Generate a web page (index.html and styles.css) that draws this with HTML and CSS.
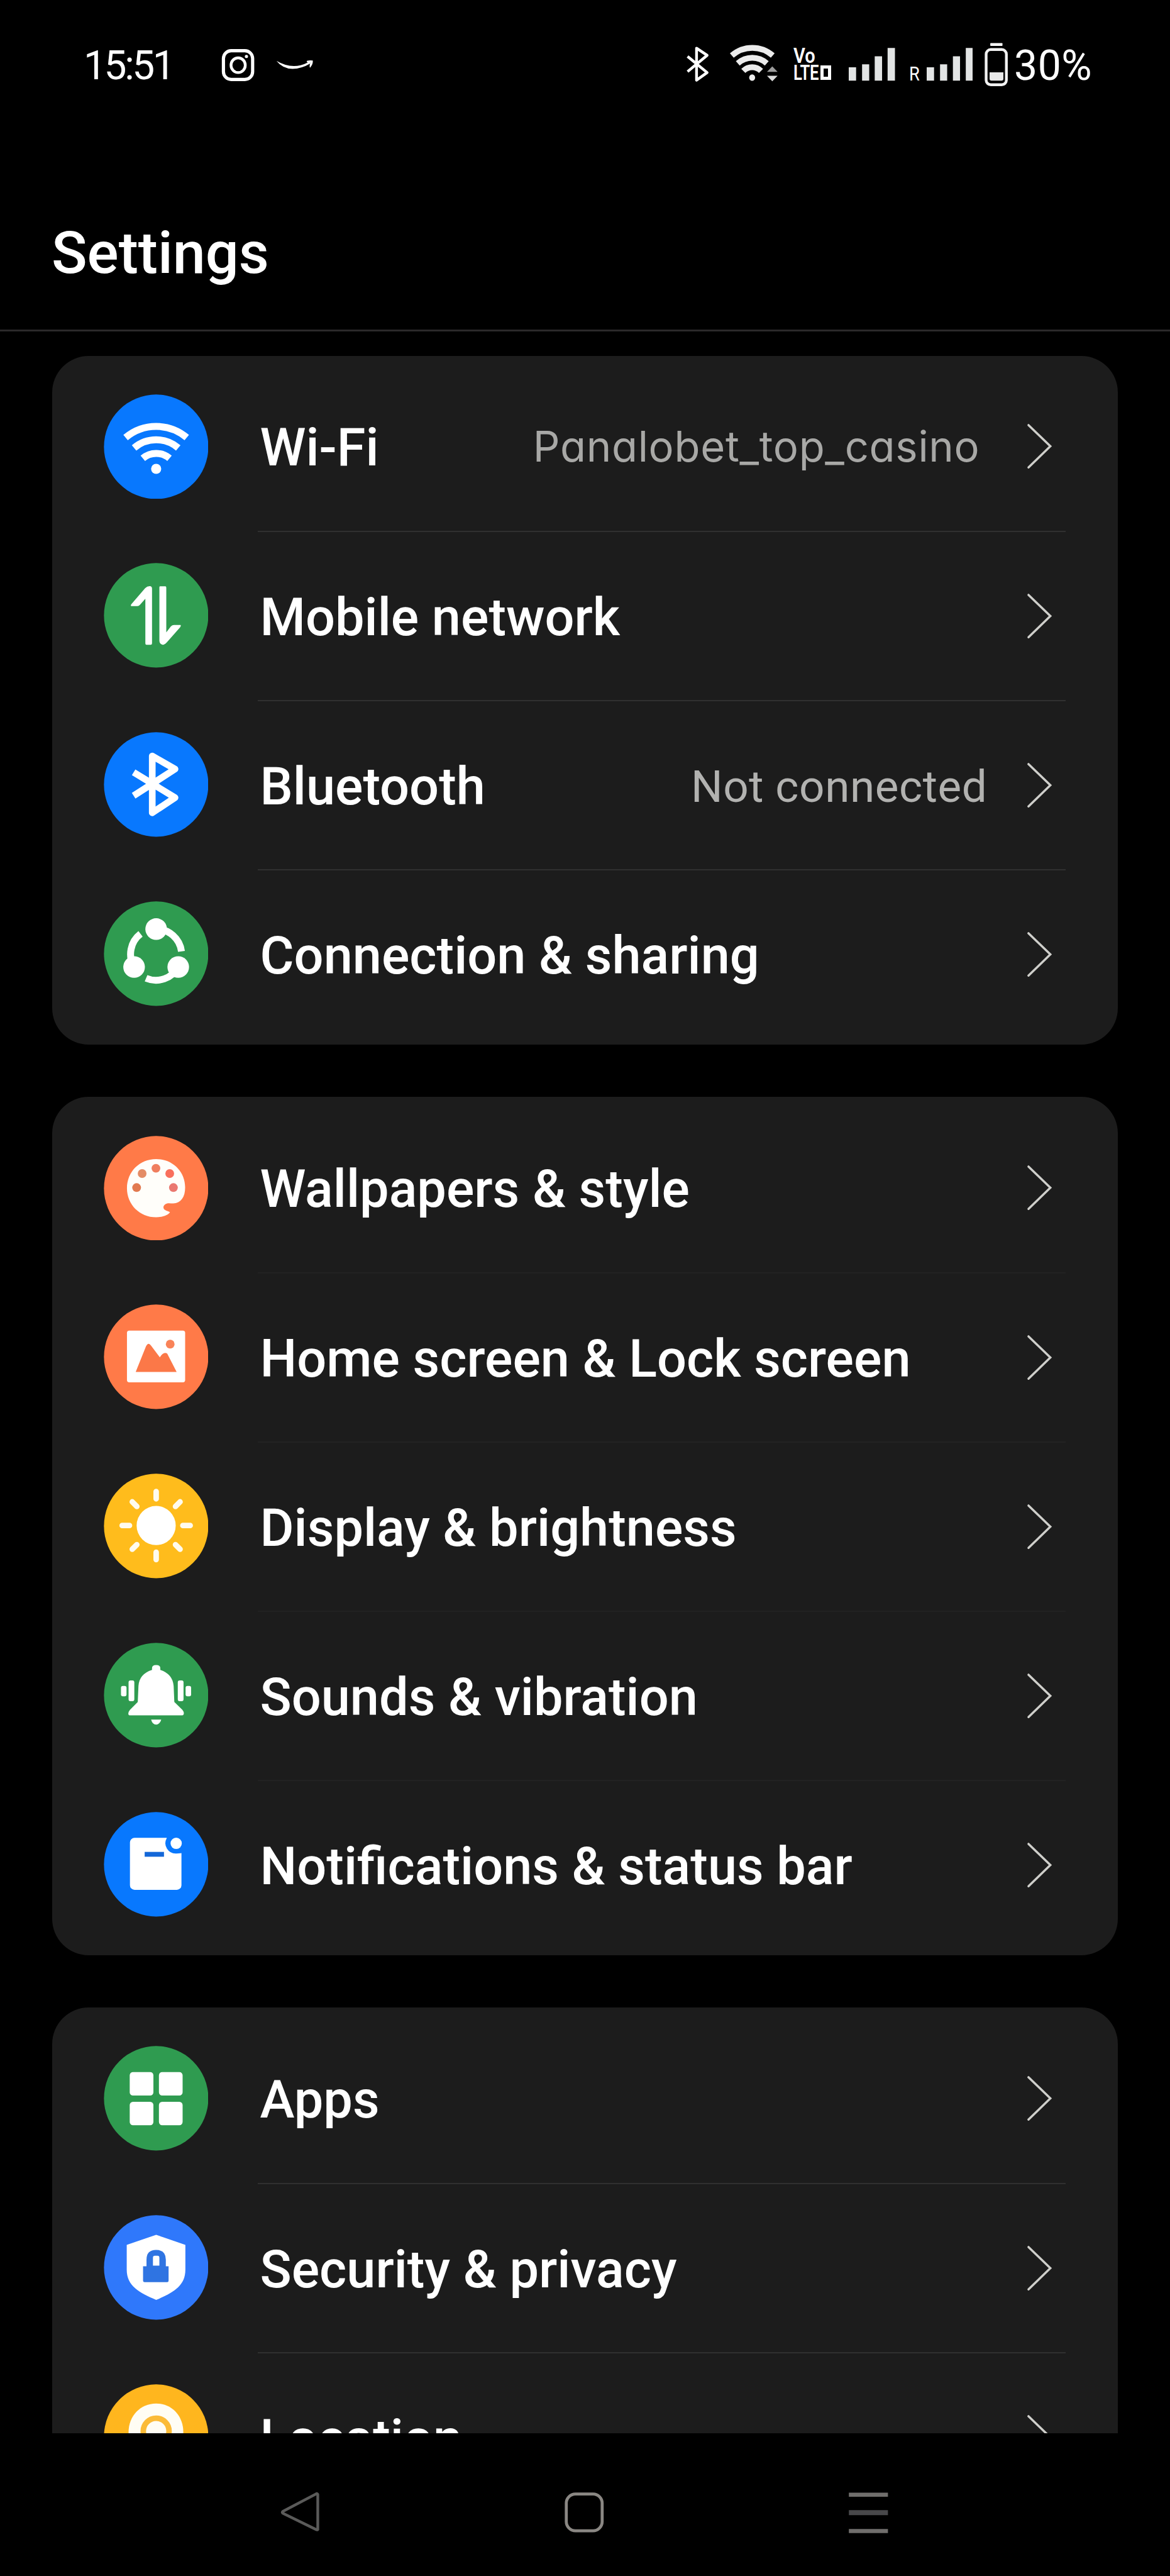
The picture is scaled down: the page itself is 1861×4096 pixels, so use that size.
FILE: index.html
```html
<!DOCTYPE html>
<html lang="en">
<head>
<meta charset="utf-8">
<title>Settings</title>
<link rel="stylesheet" href="styles.css">
</head>
<body>
<div class="screen">
  <div class="status-bar">
    <span class="clock">15:51</span>
    <svg class="s-insta" viewBox="480 90 76 100"><rect x="486" y="110" width="63.5" height="62.5" rx="17" fill="none" stroke="#fff" stroke-width="7"/><ellipse cx="518" cy="141.500" rx="15.500" ry="16" fill="none" stroke="#fff" stroke-width="6"/><circle cx="536" cy="122.500" r="3.500" fill="#fff"/></svg>
    <svg class="s-smile" viewBox="600 90 84 100"><path d="M601 132Q636 152.500 668 136L673 131.500L674.500 138Q655 149.500 636 149.500Q614 149 601 132Z" fill="#fff"/><path d="M667 132Q674 130 680 131.500Q681 139 674 147Q672 145 674.500 136Q671 134 667 135Z" fill="#fff"/></svg>
    <div class="status-right">
      <svg class="s-bt" viewBox="1490 90 54 100"><path d="M1495 122.500L1537.500 157.500L1514.500 174V104.500L1537.500 120L1495 155.500" fill="none" stroke="#fff" stroke-width="6" stroke-linejoin="round"/></svg>
      <svg class="s-wifi" viewBox="1586 90 108 100"><g fill="none" stroke="#ececec" stroke-width="12.500"><path d="M1591.500 120.500A67.500 67.500 0 0 1 1680.500 120.500"/><path d="M1604.500 137.500A47 47 0 0 1 1667.500 137.500"/><path d="M1616.500 154A27 27 0 0 1 1655 154"/></g><ellipse cx="1635.700" cy="168.500" rx="6.500" ry="7" fill="#f0f0f0"/><path d="M1679.500 144L1691 156H1668Z" fill="#9c9c9c"/><path d="M1679.500 176.500L1691 164.500H1668Z" fill="#dcdcdc"/></svg>
      <div class="volte"><span class="vo">Vo</span><div class="lted"><span class="lte">LTE</span><i class="hd"></i></div></div>
      <svg class="s-bars" viewBox="1845 90 101 100"><path d="M1845 146h16v29h-16zM1874 139.500h15.500v35.500h-15.500zM1901.500 122h16v53h-16zM1929.500 104h16v71h-16z" fill="#e2e4e4"/></svg>
      <span class="roam">R</span>
      <svg class="s-bars2" viewBox="2014 90 101 100"><path d="M2014 146h16v29h-16zM2043 139.500h15.500v35.500h-15.500zM2071 122h15.500v53h-15.500zM2099 104h16v71h-16z" fill="#e2e4e4"/></svg>
      <svg class="s-batt" viewBox="2140 90 51 100"><rect x="2152.500" y="93.500" width="26.500" height="6" rx="1" fill="#fff"/><rect x="2143.500" y="107.500" width="44" height="76.500" rx="10" fill="none" stroke="#f2f2f2" stroke-width="6"/><path d="M2151 157h30v14q0 4-4 4h-22q-4 0-4-4z" fill="#e8e8e8"/></svg>
      <span class="pct">30%</span>
    </div>
  </div>
  <header class="header"><h1>Settings</h1></header>
  <main class="list">
    <section class="card">
      <div class="row">
        <svg class="icon" viewBox="0 0 228 228"><circle cx="114" cy="114" r="113.500" fill="#0878fe"/><g fill="none" stroke="#fff" stroke-width="15"><path d="M47.500 94A103 103 0 0 1 180.500 94"/><path d="M66 116.500A74 74 0 0 1 162 116.500"/><path d="M85 139A45 45 0 0 1 143 139"/></g><circle cx="114" cy="162" r="11" fill="#fff"/></svg>
        <div class="body"><span class="label">Wi-Fi</span><span class="value ssid">Panalobet_top_casino</span><svg class="chev" viewBox="0 0 56 100"><path d="M4 4L51.500 50L4 96"/></svg></div>
      </div>
      <div class="row">
        <svg class="icon" viewBox="0 0 228 228"><circle cx="114" cy="114" r="113.500" fill="#2f9b50"/><path d="M105 175Q105 178 102 178H93Q90.500 178 90.500 175V78L79 91Q76.500 94 73 94H60Q58 93 60 90L90 55Q95 50 101 50.500Q105 51 105 56ZM121 53Q121 51 123 51H134Q136 51 136 54V151L146 138Q149 135 153 135H167Q168.500 136.500 166 140L137 173Q131 179 128 178Q121 176 121 170Z" fill="#fff"/></svg>
        <div class="body"><span class="label">Mobile network</span><svg class="chev" viewBox="0 0 56 100"><path d="M4 4L51.500 50L4 96"/></svg></div>
      </div>
      <div class="row">
        <svg class="icon" viewBox="0 0 228 228"><circle cx="114" cy="114" r="113.500" fill="#0878fe"/><path d="M65 87.500L155 142.500L105.500 175.500V52L155 80.500L65 138.500" fill="none" stroke="#fff" stroke-width="14.500" stroke-linejoin="round"/></svg>
        <div class="body"><span class="label">Bluetooth</span><span class="value">Not connected</span><svg class="chev" viewBox="0 0 56 100"><path d="M4 4L51.500 50L4 96"/></svg></div>
      </div>
      <div class="row">
        <svg class="icon" viewBox="0 0 228 228"><circle cx="114" cy="114" r="113.500" fill="#2f9b50"/><g fill="#fff"><circle cx="114" cy="60.500" r="23.500"/><circle cx="66" cy="143" r="23.500"/><circle cx="162" cy="143" r="23.500"/></g><g fill="none" stroke="#fff" stroke-width="15"><path d="M114 60.500A55.500 55.500 0 0 1 169 109"/><path d="M66 143A55.500 55.500 0 0 1 80 71"/><path d="M162 143A55.500 55.500 0 0 1 92 167.500"/></g></svg>
        <div class="body"><span class="label">Connection &amp; sharing</span><svg class="chev" viewBox="0 0 56 100"><path d="M4 4L51.500 50L4 96"/></svg></div>
      </div>
    </section>

    <section class="card faint">
      <div class="row">
        <svg class="icon" viewBox="0 0 228 228"><circle cx="114" cy="114" r="113.500" fill="#ff7a48"/><path d="M114 50.500C150 50.500 177 78 177 112C177 133 168 146 151 147C146 147 142 146 138 147C130 149 127 157 133 161C137 164 141 164 144 166C141 172 127 177 114 177C78 177 50.500 149 50.500 114C50.500 78 78 50.500 114 50.500Z" fill="#fffefa"/><circle cx="71.500" cy="112.500" r="9.500" fill="#e27a50"/><circle cx="83.500" cy="82" r="9.500" fill="#e48c66"/><circle cx="113.500" cy="70.500" r="9.500" fill="#f07e5e"/><circle cx="143.500" cy="82" r="9.500" fill="#f96f5c"/><circle cx="151.500" cy="112.500" r="9.500" fill="#ea7870"/></svg>
        <div class="body"><span class="label">Wallpapers &amp; style</span><svg class="chev" viewBox="0 0 56 100"><path d="M4 4L51.500 50L4 96"/></svg></div>
      </div>
      <div class="row">
        <svg class="icon" viewBox="0 0 228 228"><circle cx="114" cy="114" r="113.500" fill="#ff7a48"/><rect x="50.500" y="57" width="126.500" height="112.500" rx="5" fill="#fff"/><path d="M69.500 147L92 91Q97 81 103 90L122 115Q130 102 138 107L158.500 147Z" fill="#fb7848"/><circle cx="144.500" cy="86.500" r="9.500" fill="#f98358"/></svg>
        <div class="body"><span class="label">Home screen &amp; Lock screen</span><svg class="chev" viewBox="0 0 56 100"><path d="M4 4L51.500 50L4 96"/></svg></div>
      </div>
      <div class="row">
        <svg class="icon" viewBox="0 0 228 228"><circle cx="114" cy="114" r="113.500" fill="#ffbc1c"/><circle cx="114" cy="113" r="42.500" fill="#fff"/><g fill="none" stroke="#fffbee" stroke-width="12" stroke-linecap="round"><path d="M114 39v16M114 171v16M40 113h16M172 113h16M62 61.500l10 10M166 61.500l-10 10M62 164.500l10-10M166 164.500l-10-10"/></g></svg>
        <div class="body"><span class="label">Display &amp; brightness</span><svg class="chev" viewBox="0 0 56 100"><path d="M4 4L51.500 50L4 96"/></svg></div>
      </div>
      <div class="row">
        <svg class="icon" viewBox="0 0 228 228"><circle cx="114" cy="114" r="113.500" fill="#2f9b50"/><path d="M105 59V55Q105 48.500 114 48.500Q123 48.500 123 55V59Q150 68 152 94L153.500 129L171 146Q175 151 174 155Q173 158 170 158H57Q54 158 53.500 155Q53 151 57 146L74 129L75.500 94Q77 68 105 59ZM103 167H125Q122 178 114 178Q106 178 103 167Z" fill="#fff"/><g fill="#fff"><rect x="54" y="82" width="12.500" height="45" rx="4"/><rect x="161" y="82" width="12.500" height="45" rx="4"/><rect x="37.500" y="94" width="12" height="22.500" rx="4"/><rect x="178" y="94" width="12" height="22.500" rx="4"/></g></svg>
        <div class="body"><span class="label">Sounds &amp; vibration</span><svg class="chev" viewBox="0 0 56 100"><path d="M4 4L51.500 50L4 96"/></svg></div>
      </div>
      <div class="row">
        <svg class="icon" viewBox="0 0 228 228"><circle cx="114" cy="114" r="113.500" fill="#0878fe"/><rect x="57" y="56.500" width="112" height="113" rx="10" fill="#fff"/><path d="M137 55H171V89Q169 90.500 158 90.500A22.500 22.500 0 0 1 137 57Z" fill="#0878fe"/><circle cx="157.500" cy="68.500" r="12.300" fill="#fff"/><rect x="89" y="87" width="42" height="10.500" fill="#1467d8"/></svg>
        <div class="body"><span class="label">Notifications &amp; status bar</span><svg class="chev" viewBox="0 0 56 100"><path d="M4 4L51.500 50L4 96"/></svg></div>
      </div>
    </section>

    <section class="card">
      <div class="row">
        <svg class="icon" viewBox="0 0 228 228"><circle cx="114" cy="114" r="113.500" fill="#2f9b50"/><g fill="#fff"><rect x="56.500" y="57" width="51.500" height="51" rx="7"/><rect x="120" y="57" width="51.500" height="51" rx="7"/><rect x="56.500" y="121.500" width="51.500" height="51" rx="7"/><rect x="120" y="121.500" width="51.500" height="51" rx="7"/></g></svg>
        <div class="body"><span class="label">Apps</span><svg class="chev" viewBox="0 0 56 100"><path d="M4 4L51.500 50L4 96"/></svg></div>
      </div>
      <div class="row">
        <svg class="icon" viewBox="0 0 228 228"><circle cx="114" cy="114" r="113.500" fill="#2f78fb"/><path d="M114 43L177.500 65V119C177.500 154 151 169 114 184.500C77 169 50 154 50 119V65Z" fill="#fff"/><path d="M85.500 111.500H93V97Q93 76 114 76Q135 76 135 97V111.500H141V143Q141 146 138 146H89Q85.500 146 85.500 143ZM107 93V110H121V93Q121 88.500 117 88.500H111Q107 88.500 107 93Z" fill="#2f74e2" fill-rule="evenodd"/></svg>
        <div class="body"><span class="label">Security &amp; privacy</span><svg class="chev" viewBox="0 0 56 100"><path d="M4 4L51.500 50L4 96"/></svg></div>
      </div>
      <div class="row">
        <svg class="icon" viewBox="0 0 228 228"><circle cx="114" cy="114" r="113.500" fill="#ffb61e"/><path d="M114 42C148 42 173 69 173 104C173 142 140 170 114 188C88 170 54 142 54 104C54 69 80 42 114 42Z" fill="#fffdf4"/><circle cx="114" cy="102" r="28" fill="none" stroke="#fbbb38" stroke-width="12"/></svg>
        <div class="body"><span class="label">Location</span><svg class="chev" viewBox="0 0 56 100"><path d="M4 4L51.500 50L4 96"/></svg></div>
      </div>
    </section>
  </main>
  <nav class="nav">
    <svg class="n-back" viewBox="608 5412 92 98"><path d="M692 5422V5498Q691 5500 688 5498L616 5463Q614 5461 616 5459L688 5421Q691 5419 692 5422Z" fill="none" stroke="#5a5a59" stroke-width="6"/></svg>
    <svg class="n-home" viewBox="1226 5412 92 98"><rect x="1232.500" y="5421" width="78" height="80" rx="20" fill="none" stroke="#8a8783" stroke-width="6.500"/></svg>
    <svg class="n-recent" viewBox="1844 5412 92 98"><path d="M1847 5418h85v9h-85zM1847 5497h85v9h-85z" fill="#706e6c"/><path d="M1847 5456h85v11h-85z" fill="#48484a"/></svg>
  </nav>
</div>
</body>
</html>
```
FILE: styles.css
```css
* { box-sizing: border-box; }
html, body { margin: 0; background: #000; }
body { font-family: Roboto, "Liberation Sans", sans-serif; color: #fff; }
svg { display: block; flex: none; }
span { white-space: nowrap; flex: none; }

.screen {
  width: 1861px;
  height: 4096px;
  display: flex;
  flex-direction: column;
  background: #000;
  overflow: hidden;
}

/* status bar */
.status-bar {
  height: 205px;
  flex: none;
  display: flex;
  align-items: center;
  padding: 0 118px 0 133px;
}
.status-bar svg { height: 73.15px; }
.clock, .pct { font-size: 64px; line-height: 75px; padding-top: 4px; }
.clock { width: 218px; letter-spacing: -3.4px; }
.s-insta { width: 55.6px; }
.s-smile { width: 61.5px; margin-left: 32.2px; }
.status-right { margin-left: auto; display: flex; align-items: center; width: 653px; }
.s-bt { width: 39.5px; }
.s-wifi { width: 79px; margin-left: 30.7px; }
.volte {
  display: flex;
  flex-direction: column;
  width: 60px;
  margin-left: 22.5px;
  font-weight: 600;
  font-size: 33px;
  line-height: 26.5px;
}
.vo, .lte { transform: scaleX(0.78); transform-origin: left center; }
.vo { transform: scaleX(0.88); width: 41px; }
.lted { display: flex; align-items: center; }
.lte { width: 43px; letter-spacing: -0.5px; }
.hd { flex: none; width: 17px; height: 23px; border: 5px solid #fff; }
.s-bars { width: 73.9px; margin-left: 28px; }
.roam { width: 22px; margin-left: 22px; font-size: 31px; line-height: 36px; padding-top: 31px; transform: scaleX(0.88); transform-origin: left center; }
.s-bars2 { width: 73.9px; margin-left: 6px; }
.s-batt { width: 37.3px; margin-left: 18.3px; }
.pct { margin-left: 10px; font-size: 66px; letter-spacing: 0.500px; }

/* title */
.header {
  height: 322px;
  flex: none;
  border-bottom: 3px solid #2b292a;
  padding: 143px 0 0 82px;
}
h1 { margin: 0; font-weight: 500; font-size: 93.500px; line-height: 108px; }

/* cards */
.list { height: 3341.500px; flex: none; overflow: hidden; padding: 38.500px 83px 0 82.500px; }
.card {
  background: #1c1c1c;
  border-radius: 58px;
  padding: 10px 0;
  margin-bottom: 83.400px;
}
.row { height: 268.900px; display: flex; align-items: center; padding-left: 82.200px; }
.icon { width: 166.800px; height: 166.800px; }
.body {
  width: 1285px;
  height: 100%;
  margin-left: 79px;
  padding-right: 21px;
  display: flex;
  align-items: center;
}
.row + .row .body { border-top: 2px solid #303030; }
.faint .row + .row .body { border-top-color: #222222; }
.label { font-size: 82.900px; line-height: 96px; font-weight: 500; padding: 5px 0 0 3px; }
.value { margin-left: auto; font-size: 71px; line-height: 84px; font-weight: 400; color: #b2b2b0; padding-top: 4px; letter-spacing: 0.600px; }
.ssid { font-family: Inter, Roboto, sans-serif; font-size: 67px; font-weight: 400; font-feature-settings: "cv11"; color: #a8a8a6; padding: 1px 12px 0 0; letter-spacing: 0.700px; }
.chev { width: 41px; height: 73.150px; margin-left: auto; }
.value + .chev { margin-left: 63px; }
.chev path { fill: none; stroke: #cfcfcb; stroke-width: 4.800; stroke-linecap: round; stroke-linejoin: miter; }

/* navigation bar */
.nav { flex: 1; display: flex; align-items: center; padding: 25px 446px 0 444px; justify-content: space-between; }
.nav svg { width: 67.300px; height: 71.700px; }
```
